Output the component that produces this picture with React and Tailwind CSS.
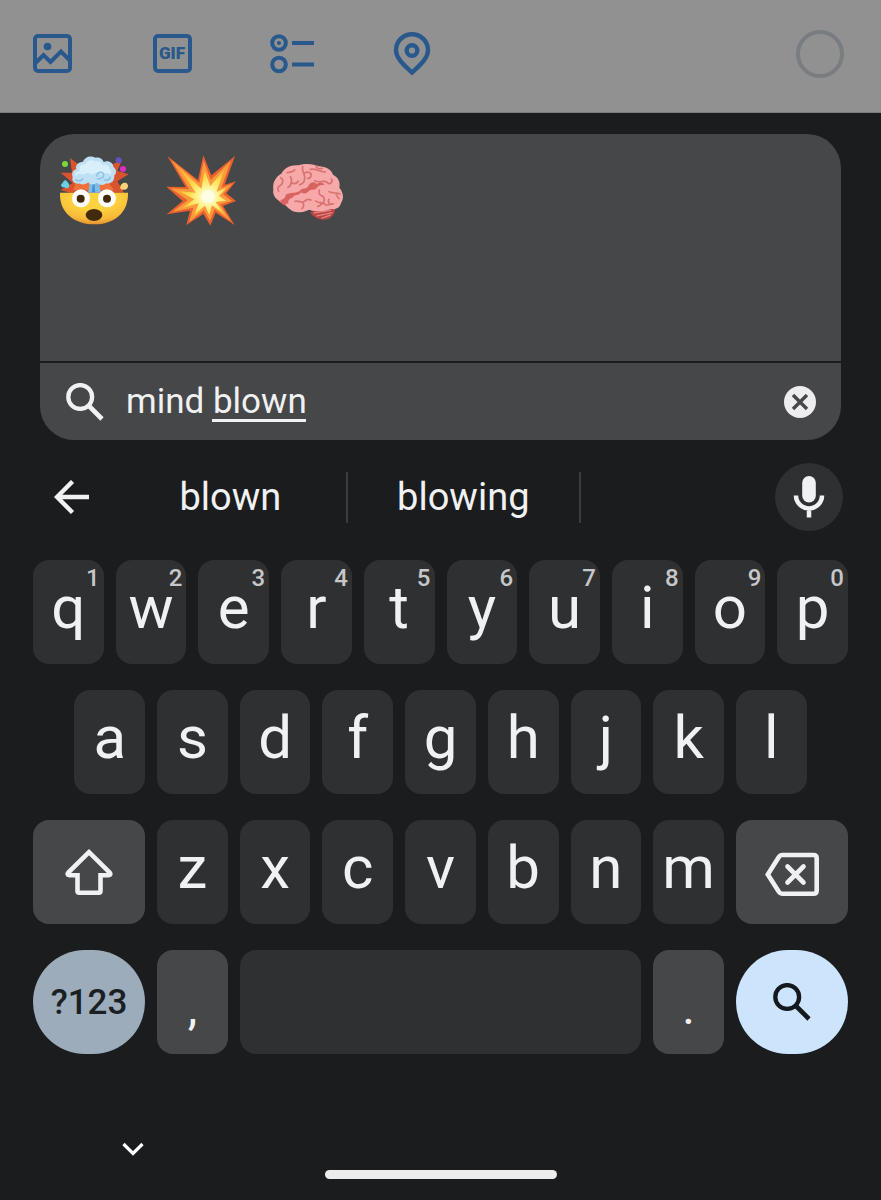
import React from 'react';

const TOP_ROW = ['q', 'w', 'e', 'r', 't', 'y', 'u', 'i', 'o', 'p'];
const HOME_ROW = ['a', 's', 'd', 'f', 'g', 'h', 'j', 'k', 'l'];
const BOTTOM_ROW = ['z', 'x', 'c', 'v', 'b', 'n', 'm'];

/* Toolbar icons */

function ImageIcon() {
  return (
    <svg width="39" height="39" viewBox="0 0 39 39" fill="none" stroke="currentColor" strokeWidth="4">
      <rect x="2" y="2" width="35" height="35" rx="3" />
      <circle cx="14.5" cy="12.5" r="3.8" fill="currentColor" stroke="none" />
      <path d="M3 28.5 10.5 21l7 7L28 17.5l9 9" />
    </svg>
  );
}

function PollIcon() {
  return (
    <svg width="44" height="40" viewBox="0 0 44 40" fill="none" stroke="currentColor" strokeWidth="4">
      <circle cx="9" cy="9" r="6.8" />
      <circle cx="9" cy="9" r="2.1" fill="currentColor" stroke="none" />
      <circle cx="9" cy="30.5" r="6.8" />
      <path d="M22 9h22M22 30.5h22" />
    </svg>
  );
}

function PinIcon() {
  return (
    <svg width="38" height="44" viewBox="0 0 38 44" fill="none" stroke="currentColor" strokeWidth="4.4">
      <path d="M19 40.5C12 34 3 26.5 3 18.2a16 16 0 0 1 32 0C35 26.5 26 34 19 40.5Z" />
      <circle cx="19" cy="18.5" r="5.3" />
    </svg>
  );
}

/* Emoji */

function ExplodingHead() {
  return (
    <svg className="size-full" viewBox="57 45 213 213">
      <defs>
        <radialGradient id="face" cx="0.5" cy="0.2" r="0.8">
          <stop offset="0.4" stopColor="#fdd23f" />
          <stop offset="0.8" stopColor="#f8b838" />
          <stop offset="1" stopColor="#e59132" />
        </radialGradient>
      </defs>
      <path
        d="M90 158 62 150 98 129 62 98 96 98 90 54 125 80H200L246 60 232 92 266 103 232 124 252 158Z"
        fill="#d9532f"
      />
      <path d="m100 150 8-25 96 0 18 26Z" fill="#ef7339" />
      <path d="M60 158h204c2 60-42 95-101 95S57 218 60 158Z" fill="url(#face)" />
      <path d="M143 158c6-12 6-26 2-40h36c-5 15-3 28 4 40Z" fill="#7dbbe8" />
      <path d="M155 157c4-12 3-22 1-32h8c-1 12 0 22 2 32Z" fill="#3d8fd6" />
      <path
        d="M118 131c-16 1-24-8-20-20-5-13 3-22 11-23-4-13 6-22 20-23 5-14 23-20 37-12 12-2 23 4 25 13 14-6 28 2 29 14 10 8 11 19 3 26 1 17-9 27-24 24-10 8-22 5-28-2-12 8-22 7-26-1-9 7-21 9-27 2Z"
        fill="#bde0f5"
      />
      <path
        d="M106 108c-2-9 5-15 13-14-3-13 5-22 17-21 5-12 20-16 30-8 10-3 19 2 21 10 12-4 22 3 21 12 6 5 8 12 4 17-10-7-19-6-25 0-12-9-24-8-30 1-9-8-19-8-25-1-9-5-19-4-26 4Z"
        fill="#d9effb"
      />
      <path
        d="M108 120c8 5 15 3 20-3M171 108c0-14 20-15 20-3 0 11-18 12-18 12M193 120c9 2 15-1 18-8"
        fill="none"
        stroke="#8fc3e6"
        strokeWidth="5"
        strokeLinecap="round"
      />
      <circle cx="75" cy="72" r="9" fill="#7bd83c" />
      <circle cx="236" cy="61" r="9" fill="#6550c4" />
      <circle cx="249" cy="87" r="9" fill="#dc2fc0" />
      <path d="M76 120c7 4 12 12 12 17-2 9-12 9-15 5-10 2-13-10-5-13 1-5 5-7 8-9Z" fill="#69cfe4" />
      <path d="M245 132c10-8 20-3 19 7-1 9-8 12-16 10-9 0-9-10-3-17Z" fill="#fbd277" />
      <circle cx="123" cy="175" r="27" fill="#fff" />
      <circle cx="201" cy="175" r="27" fill="#fff" />
      <circle cx="122" cy="176" r="12" fill="#422b0d" />
      <circle cx="201" cy="176" r="12" fill="#422b0d" />
      <ellipse cx="162" cy="225" rx="25" ry="18" fill="#422b0d" />
    </svg>
  );
}

function Collision() {
  return (
    <svg className="size-full" viewBox="48 45 213 213">
      <defs>
        <radialGradient id="blast" gradientUnits="userSpaceOnUse" cx="174" cy="170" r="80">
          <stop offset="0" stopColor="#fffef0" />
          <stop offset="0.35" stopColor="#fff59b" />
          <stop offset="0.7" stopColor="#ffdf4f" />
          <stop offset="1" stopColor="#ffc03a" />
        </radialGradient>
      </defs>
      <path
        d="M52 48 144 120 160 46 184 106 255 48 224 134 258 124 229 160 258 183 219 198 254 255 197 218 181 257 160 222 109 255 120 212 50 223 98 183 49 140 107 141Z"
        fill="#e8602e"
      />
      <path
        d="M64 60 148 130 161 62 182 120 243 62 214 143 247 131 219 163 246 183 210 193 242 243 194 208 180 243 162 211 118 245 130 203 68 215 113 181 62 145 118 148Z"
        fill="#fa9a3c"
      />
      <path
        d="M90 86 154 146 164 92 181 138 224 88 200 155 229 143 207 168 229 182 197 186 223 222 186 196 178 226 165 197 133 225 146 190 95 205 133 178 87 154 137 158Z"
        fill="url(#blast)"
      />
      <circle cx="174" cy="170" r="20" fill="#fffce5" />
    </svg>
  );
}

function Brain() {
  return (
    <svg className="size-full" viewBox="39 45 213 213">
      <path d="M150 216c15 28 55 27 65 14 10-8 12-20 9-28Z" fill="#b8423f" />
      <path d="m160 219 54-8M169 228l49-10M184 235l28-10" stroke="#df817c" strokeWidth="4" />
      <path
        d="M52 178c10 14 24 21 38 24l20-20-25-30Z"
        fill="#d3605c"
      />
      <path
        d="M77 188c-24-2-41-19-37-39-3-23 8-39 24-48 8-17 30-28 51-25 21-7 47-5 61 3 23 0 39 12 43 25 17 8 22 23 19 39 13 14 14 35 5 46-3 15-17 21-31 18-18 9-49 9-64 2-21 10-47 11-58-1-9-5-14-12-13-20Z"
        fill="#f7a8a8"
      />
      <path
        d="M77 164c18-8 28-3 42-11 9-13 19-2 26-15 4-13 19-15 25-6 10-7 20-4 24 2-11 0-20 3-24 10-8 9-20 2-25 11-10 8-18 6-21 2-9 12-18 4-26 16-12 2-14 10-13 19-12-3-22-6-24-12 12-2 16-9 16-16Z"
        fill="#d86461"
      />
      <g fill="none" stroke="#da7272" strokeWidth="5" strokeLinecap="round" strokeLinejoin="round">
        <path d="M62 113c9 5 8 16 0 23-9 3-11 10-6 17" />
        <path d="M91 110c5 7 5 12 2 18 10 5 17 4 22-5M93 128c0 8-4 12-9 14" />
        <path d="M82 98c10-3 17-1 22-8M128 80c-4 17 8 20 6 34 0 11-6 18-15 20" />
        <path d="M132 101c8-9 23-4 21 6-1 7-6 9-10 8M151 88c14-4 29 8 45 8M168 78c2 8 11 10 19 7" />
        <path d="M164 122c16 11 26-5 38 6 9 9 18-5 12-11" />
        <path d="M178 150c-4 10 1 17 11 19 6 9 6 16-2 22M207 155c11 7 23 1 33 7M228 160c0 7 6 11 9 16" />
        <path d="M105 184c11-4 19 7 28 0 6-6 13-8 20-4M128 188c6 8 3 13-2 18" />
        <path d="M167 183c8 8 21 2 29 11 9 4 16-5 24-2M185 188c-2 7-6 10-12 11M211 193c-6-5-8-10-4-15" />
      </g>
    </svg>
  );
}

/* Keyboard icons */

function SearchIcon() {
  return (
    <svg width="38" height="38" viewBox="0 0 38 38" fill="none" stroke="currentColor" strokeWidth="4.3">
      <circle cx="14.2" cy="14" r="11.9" />
      <path d="m23 23 13 13" strokeWidth="4.6" />
    </svg>
  );
}

function ClearIcon() {
  return (
    <svg width="32" height="32" viewBox="0 0 32 32">
      <circle cx="16" cy="16" r="16" fill="#ededef" />
      <path d="m9 9 14 14M23 9 9 23" stroke="#464749" strokeWidth="3.4" />
    </svg>
  );
}

function BackIcon() {
  return (
    <svg width="35" height="34" viewBox="0 0 35 34" fill="none" stroke="currentColor" strokeWidth="4.4">
      <path d="M18.5 1.5 3 17l15.5 15.500M3 17h32" />
    </svg>
  );
}

function MicIcon() {
  return (
    <svg width="32" height="42" viewBox="0 0 32 42" fill="none" stroke="currentColor" strokeWidth="4.5">
      <rect x="9.2" y="0" width="13.6" height="26.5" rx="6.8" fill="currentColor" stroke="none" />
      <path d="M3 19.5a13 13 0 0 0 26 0M16 32.5V41.5" />
    </svg>
  );
}

function ShiftIcon() {
  return (
    <svg width="50" height="48" viewBox="0 0 50 48" fill="none" stroke="currentColor" strokeWidth="4.6">
      <path d="M25 4.2 4.5 24.3c-1.500 1.700-1 3 .8 3H13.500V43c0 1 .6 1.700 1.700 1.700h19.600c1.100 0 1.700-.7 1.700-1.700V27.300h8.200c1.800 0 2.300-1.300.8-3Z" />
    </svg>
  );
}

function BackspaceIcon() {
  return (
    <svg width="54" height="48" viewBox="0 0 54 48" fill="none" stroke="currentColor" strokeWidth="4.6">
      <path d="M2.8 26.5 14 8.800c.7-1.200 1.600-1.800 3-1.800h31.500c2 0 3.200 1.200 3.200 3.200v32.300c0 2-1.200 3.200-3.200 3.200H17c-1.400 0-2.300-.6-3-1.800Z" />
      <path d="m22.500 18.500 16 16M38.500 18.500l-16 16" strokeLinecap="round" />
    </svg>
  );
}

function ChevronIcon() {
  return (
    <svg width="22" height="14" viewBox="0 0 22 14" fill="none" stroke="currentColor" strokeWidth="3.2">
      <path d="m1.5 2 9.500 9.500L20.500 2" />
    </svg>
  );
}

function LetterKey({ letter, hint, className = '' }) {
  return (
    <button
      type="button"
      className={`relative col-span-2 flex h-[104px] items-center justify-center rounded-2xl bg-[#2f3032] pb-2 text-[60px] leading-none ${className}`}
    >
      {letter}
      {hint && (
        <span className="absolute top-[6px] right-1 text-2xl leading-6 font-medium text-[#c6c7c9]">{hint}</span>
      )}
    </button>
  );
}

export default function App() {
  return (
    <div className="flex min-h-screen flex-col bg-[#1b1c1e] font-['Roboto',sans-serif] text-[#f0f1f3]">
      {/* Compose toolbar */}
      <div className="flex h-[113px] items-center gap-[72px] border-b border-[#7b7c7c] bg-[#919191] pr-[37px] pb-[5px] pl-7 text-[#28588c]">
        <button type="button" aria-label="Add image" className="flex w-12 justify-center">
          <ImageIcon />
        </button>
        <button type="button" className="flex w-12 justify-center">
          <span className="flex size-[39px] items-center justify-center rounded-[5px] border-4 border-[#28588c] text-[17px] leading-none font-black">
            GIF
          </span>
        </button>
        <button type="button" aria-label="Add poll" className="flex w-12 justify-center">
          <PollIcon />
        </button>
        <button type="button" aria-label="Add location" className="flex w-12 justify-center">
          <PinIcon />
        </button>
        <div className="ml-auto size-12 rounded-full border-4 border-[#797d81]" />
      </div>

      {/* Emoji search panel */}
      <div className="mx-10 mt-[21px] overflow-hidden rounded-[34px] bg-[#464749]">
        <div className="flex h-[227px] items-start gap-9 px-[19px] pt-[21px]">
          <button type="button" aria-label="Exploding head" className="size-[71px]">
            <ExplodingHead />
          </button>
          <button type="button" aria-label="Collision" className="size-[71px]">
            <Collision />
          </button>
          <button type="button" aria-label="Brain" className="size-[71px]">
            <Brain />
          </button>
        </div>
        <div className="flex h-[79px] items-center border-t-2 border-[#1b1c1e] pr-[25px] pl-[26px]">
          <SearchIcon />
          <div className="relative ml-[22px] flex-1">
            <input
              type="text"
              aria-label="Search emoji"
              defaultValue="mind blown"
              className="w-full bg-transparent text-[35px] leading-10 outline-none"
            />
            {/* Composing underline */}
            <span className="absolute bottom-0 left-[86px] h-[3px] w-[94px] bg-[#f0f1f3]" />
          </div>
          <button type="button" aria-label="Clear">
            <ClearIcon />
          </button>
        </div>
      </div>

      {/* Suggestions */}
      <div className="flex h-[114px] items-center pr-[38px] pl-10 text-[38px]">
        <button type="button" aria-label="Back" className="w-[75px] pl-[14px]">
          <BackIcon />
        </button>
        <button type="button" className="h-[51px] w-[29%] border-r-2 border-[#3b3c3e] leading-none">
          blown
        </button>
        <button type="button" className="h-[51px] w-[29%] border-r-2 border-[#3b3c3e] leading-none">
          blowing
        </button>
        <button
          type="button"
          aria-label="Voice input"
          className="ml-auto flex size-[68px] items-center justify-center rounded-full bg-[#2f3032]"
        >
          <MicIcon />
        </button>
      </div>

      {/* Keys */}
      <div className="mt-[6px] grid grid-cols-20 gap-x-3 gap-y-[26px] px-[33px]">
        {TOP_ROW.map((letter, i) => (
          <LetterKey key={letter} letter={letter} hint={String((i + 1) % 10)} />
        ))}

        {HOME_ROW.map((letter, i) => (
          <LetterKey key={letter} letter={letter} className={i === 0 ? 'col-start-2' : ''} />
        ))}

        <button
          type="button"
          aria-label="Shift"
          className="col-span-3 col-start-1 flex items-center justify-center rounded-2xl bg-[#464749]"
        >
          <ShiftIcon />
        </button>
        {BOTTOM_ROW.map((letter) => (
          <LetterKey key={letter} letter={letter} />
        ))}
        <button
          type="button"
          aria-label="Backspace"
          className="col-span-3 flex items-center justify-center rounded-2xl bg-[#464749]"
        >
          <BackspaceIcon />
        </button>

        <button
          type="button"
          className="col-span-3 h-[104px] rounded-full bg-[#9dacbb] text-[35px] leading-none font-medium text-[#1b1f23]"
        >
          ?123
        </button>
        <button type="button" className="col-span-2 rounded-2xl bg-[#464749] pt-3 text-5xl leading-none">
          ,
        </button>
        <button type="button" aria-label="Space" className="col-span-10 rounded-2xl bg-[#2f3032]" />
        <button type="button" className="col-span-2 rounded-2xl bg-[#464749] pt-3 text-5xl leading-none">
          .
        </button>
        <button
          type="button"
          aria-label="Search"
          className="col-span-3 flex items-center justify-center rounded-full bg-[#cce5fd] text-[#15191d]"
        >
          <SearchIcon />
        </button>
      </div>

      {/* Navigation bar */}
      <div className="mt-auto flex flex-col pb-[21px]">
        <button type="button" aria-label="Hide keyboard" className="ml-[122px] self-start text-white">
          <ChevronIcon />
        </button>
        <div className="mt-[14px] h-[9px] w-[232px] self-center rounded-full bg-[#ececec]" />
      </div>
    </div>
  );
}
